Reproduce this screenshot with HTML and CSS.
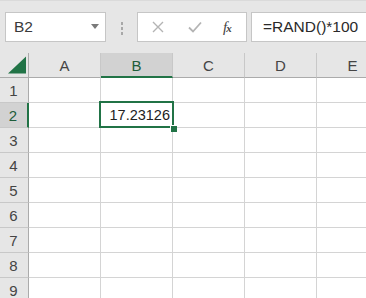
FILE: index.html
```html
<!DOCTYPE html>
<html>
<head>
<meta charset="utf-8">
<link rel="stylesheet" href="styles.css">
</head>
<body>
<div class="app">
  <div class="toolbar">
    <div class="namebox">
      <span class="name">B2</span>
      <svg class="dd" width="8" height="5" viewBox="0 0 8 5"><path d="M0 0H8L4 5Z" fill="#7a7a7a"/></svg>
    </div>
    <div class="dots"><span></span><span></span><span></span></div>
    <div class="fbtns">
      <svg class="ic" width="12" height="12" viewBox="0 0 12 12"><path d="M1 1L11 11M11 1L1 11" stroke="#b4b4b4" stroke-width="1.4" fill="none"/></svg>
      <svg class="ic" width="14" height="12" viewBox="0 0 14 12"><path d="M1 6.5L5 10.5L13 1.5" stroke="#b4b4b4" stroke-width="1.8" fill="none"/></svg>
      <span class="fx">f<span class="fxx">x</span></span>
    </div>
    <div class="formula">=RAND()*100</div>
  </div>
  <div class="grid">
    <div class="corner"><svg width="29" height="24" viewBox="0 0 29 24"><path d="M8 20.5H26V3.5Z" fill="#217346"/></svg></div>
    <div class="ch">A</div>
    <div class="ch sel">B</div>
    <div class="ch">C</div>
    <div class="ch">D</div>
    <div class="ch">E</div>

    <div class="rh">1</div><div class="c"></div><div class="c"></div><div class="c"></div><div class="c"></div><div class="c"></div>
    <div class="rh sel">2</div><div class="c"></div><div class="c active"><span class="val">17.23126</span><div class="selbox"><div class="handle"></div></div></div><div class="c"></div><div class="c"></div><div class="c"></div>
    <div class="rh">3</div><div class="c"></div><div class="c"></div><div class="c"></div><div class="c"></div><div class="c"></div>
    <div class="rh">4</div><div class="c"></div><div class="c"></div><div class="c"></div><div class="c"></div><div class="c"></div>
    <div class="rh">5</div><div class="c"></div><div class="c"></div><div class="c"></div><div class="c"></div><div class="c"></div>
    <div class="rh">6</div><div class="c"></div><div class="c"></div><div class="c"></div><div class="c"></div><div class="c"></div>
    <div class="rh">7</div><div class="c"></div><div class="c"></div><div class="c"></div><div class="c"></div><div class="c"></div>
    <div class="rh">8</div><div class="c"></div><div class="c"></div><div class="c"></div><div class="c"></div><div class="c"></div>
    <div class="rh">9</div><div class="c"></div><div class="c"></div><div class="c"></div><div class="c"></div><div class="c"></div>
  </div>
</div>
</body>
</html>
```
FILE: styles.css
```css
html, body {
  margin: 0;
  padding: 0;
}
body {
  width: 366px;
  height: 298px;
  overflow: hidden;
  background: #e6e6e6;
  font-family: "Liberation Sans", Arial, sans-serif;
}
.app {
  width: 366px;
  height: 298px;
  overflow: hidden;
}
.toolbar {
  height: 53px;
  box-sizing: border-box;
  display: flex;
  align-items: flex-start;
  padding: 12px 0 0 5px;
  border-top: 1px solid #dadada;
  background: #e6e6e6;
  width: 500px;
}
.toolbar > * { flex: none; }
.namebox {
  margin-top: -1px;
  width: 101px;
  height: 30px;
  box-sizing: border-box;
  background: #fff;
  border: 1px solid #c6c6c6;
  display: flex;
  align-items: center;
  justify-content: space-between;
  padding: 0 6px 0 8px;
}
.name {
  font-size: 15.5px;
  color: #3a3a3a;
}
.dd { margin-top: -2px; }
.dots {
  margin-left: 15px;
  width: 3px;
  height: 30px;
  display: flex;
  flex-direction: column;
  justify-content: center;
  gap: 2px;
}
.dots span {
  width: 2px;
  height: 3px;
  background: #a8a8a8;
}
.fbtns {
  margin-left: 13px;
  margin-top: -1px;
  width: 110px;
  height: 30px;
  box-sizing: border-box;
  background: #fff;
  border: 1px solid #c6c6c6;
  display: flex;
  align-items: center;
  padding-left: 14px;
}
.fbtns .ic:nth-child(2) { margin-left: 24px; }
.fx {
  margin-left: 21px;
  font-family: "Liberation Serif", "Times New Roman", serif;
  font-style: italic;
  font-size: 15px;
  color: #444;
}
.fxx {
  font-size: 11px;
  font-weight: bold;
  margin-left: -1px;
}
.formula {
  margin-left: 4px;
  margin-top: -1px;
  width: 200px;
  height: 30px;
  box-sizing: border-box;
  background: #fff;
  border: 1px solid #c6c6c6;
  padding-left: 11px;
  font-size: 15.5px;
  color: #2a2a2a;
  line-height: 28px;
}
.grid {
  display: grid;
  grid-template-columns: 29px repeat(5, 72px);
  grid-template-rows: repeat(10, 25px);
  width: 389px;
  background: #fff;
}
.grid > div {
  box-sizing: border-box;
}
.corner {
  background: #e6e6e6;
  border-right: 1px solid #ababab;
  border-bottom: 1px solid #ababab;
}
.corner svg { display: block; }
.ch {
  background: #e6e6e6;
  border-right: 1px solid #c8c8c8;
  border-bottom: 1px solid #ababab;
  display: flex;
  align-items: center;
  justify-content: center;
  font-size: 15px;
  color: #444;
}
.ch.sel {
  background: #d2d2d2;
  border-bottom: 2px solid #217346;
  color: #1e5d3a;
  padding-top: 1px;
}
.rh {
  background: #e6e6e6;
  border-right: 1px solid #ababab;
  border-bottom: 1px solid #c8c8c8;
  display: flex;
  align-items: center;
  justify-content: center;
  font-size: 15px;
  color: #444;
  padding-right: 1px;
}
.rh.sel {
  background: #d2d2d2;
  border-right: 2px solid #217346;
  color: #1e5d3a;
}
.c {
  border-right: 1px solid #d4d4d4;
  border-bottom: 1px solid #d4d4d4;
}
.c.active {
  position: relative;
  display: flex;
  align-items: center;
  justify-content: flex-end;
  padding-right: 2px;
}
.val {
  font-size: 14.5px;
  color: #222;
}
.selbox {
  position: absolute;
  left: -2px;
  top: -2px;
  width: 75px;
  height: 27px;
  box-sizing: border-box;
  border: 2px solid #217346;
}
.handle {
  position: absolute;
  left: 69px;
  top: 22px;
  width: 6px;
  height: 6px;
  background: #217346;
  border: 1px solid #fff;
  border-width: 1px 0 0 1px;
}
```
